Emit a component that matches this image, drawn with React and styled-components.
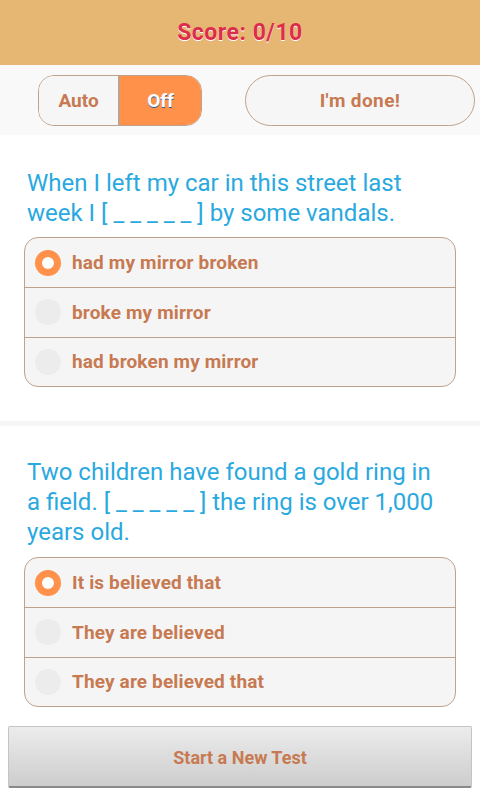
import React, { useState } from "react";
import styled, { createGlobalStyle } from "styled-components";

const Global = createGlobalStyle`
  html, body { margin: 0; padding: 0; background: #ffffff; }
  body { font-family: Roboto, "Noto Sans", sans-serif; }
  * { box-sizing: border-box; }
`;

const Page = styled.div`
  width: 480px;
  height: 800px;
  display: flex;
  flex-direction: column;
  background: #ffffff;
  overflow: hidden;
`;

const Header = styled.div`
  height: 65px;
  flex: 0 0 65px;
  background: #e6b673;
  display: flex;
  align-items: center;
  justify-content: center;
`;

const Score = styled.div`
  font-size: 23px;
  font-weight: 700;
  letter-spacing: 0.5px;
  color: #dd2c4c;
  text-shadow: 0 1px 0 #ffffff;
`;

const Toolbar = styled.div`
  height: 70px;
  flex: 0 0 70px;
  background: #f9f9f9;
  display: flex;
  align-items: center;
  padding: 0 5px 0 38px;
  gap: 43px;
`;

const Segmented = styled.div`
  display: flex;
  width: 164px;
  height: 51px;
  border: 1px solid #bfa28c;
  border-radius: 16px;
  overflow: hidden;
  background: #f6f6f6;
`;

const Segment = styled.button`
  flex: ${(p) => (p.$wide ? "0 0 79px" : "1")};
  border: none;
  border-left: ${(p) => (p.$divider ? "2px solid #bfa28c" : "none")};
  background: ${(p) => (p.$active ? "#ff914b" : "#f6f6f6")};
  color: ${(p) => (p.$active ? "#ffffff" : "#c77a52")};
  text-shadow: ${(p) => (p.$active ? "0 1px 0 #1c5c98" : "none")};
  font-family: Roboto, sans-serif;
  font-weight: 700;
  font-size: 19px;
  padding: 0;
`;

const DoneButton = styled.button`
  flex: 1;
  height: 51px;
  border: 1px solid #bfa28c;
  border-radius: 26px;
  background: #f6f6f6;
  color: #c77a52;
  font-family: Roboto, sans-serif;
  font-weight: 700;
  font-size: 19px;
  letter-spacing: 0.4px;
`;

const Section = styled.div`
  padding: ${(p) => p.$pad};
  border-top: ${(p) => (p.$sep ? "5px solid #f6f6f6" : "none")};
`;

const Question = styled.div`
  font-size: 24px;
  line-height: 30px;
  color: #2aa9e0;
  padding: 0 8px 0 3px;
  margin-bottom: ${(p) => p.$gap}px;
`;

const Options = styled.div`
  border: 1px solid #bfa28c;
  border-radius: 14px;
  overflow: hidden;
  background: #f5f5f5;
`;

const Option = styled.div`
  height: ${(p) => (p.$first ? 49 : 49.5)}px;
  display: flex;
  align-items: center;
  padding-left: 10px;
  gap: 11px;
  border-top: ${(p) => (p.$first ? "none" : "1px solid #bfa28c")};
`;

const Radio = styled.span`
  width: 26px;
  height: 26px;
  border-radius: 50%;
  flex: 0 0 26px;
  background: ${(p) => (p.$on ? "#ffffff" : "#ececec")};
  border: ${(p) => (p.$on ? "7px solid #ff914b" : "none")};
`;

const OptionText = styled.span`
  font-size: 19px;
  font-weight: 700;
  letter-spacing: 0.15px;
  color: #c77a52;
`;

const Footer = styled.div`
  padding: 19px 8px 0 8px;
`;

const NewTest = styled.button`
  width: 464px;
  height: 62px;
  border: 1px solid #c4c4c4;
  border-bottom: 2px solid #8a8a8a;
  border-radius: 2px;
  background: linear-gradient(#ececec, #cdcdcd);
  color: #c77a52;
  font-family: Roboto, sans-serif;
  font-weight: 700;
  font-size: 18px;
  padding-top: 2px;
`;

const questions = [
  {
    text: "When I left my car in this street last week I [ _ _ _ _ _ ] by some vandals.",
    options: ["had my mirror broken", "broke my mirror", "had broken my mirror"],
  },
  {
    text: "Two children have found a gold ring in a field. [ _ _ _ _ _ ] the ring is over 1,000 years old.",
    options: ["It is believed that", "They are believed", "They are believed that"],
  },
];

export default function App() {
  const [mode, setMode] = useState("off");
  const [answers, setAnswers] = useState([0, 0]);
  return (
    <Page>
      <Global />
      <Header>
        <Score>Score: 0/10</Score>
      </Header>
      <Toolbar>
        <Segmented>
          <Segment $active={mode === "auto"} onClick={() => setMode("auto")} $wide>
            Auto
          </Segment>
          <Segment $active={mode === "off"} $divider onClick={() => setMode("off")}>
            Off
          </Segment>
        </Segmented>
        <DoneButton>I'm done!</DoneButton>
      </Toolbar>
      {questions.map((q, qi) => (
        <Section
          key={qi}
          $sep={qi > 0}
          $pad={qi === 0 ? "33px 24px 34px 24px" : "31px 24px 0 24px"}
        >
          <Question $gap={qi === 0 ? 9 : 10}>{q.text}</Question>
          <Options>
            {q.options.map((o, oi) => (
              <Option
                key={oi}
                $first={oi === 0}
                onClick={() => setAnswers(answers.map((a, i) => (i === qi ? oi : a)))}
              >
                <Radio $on={answers[qi] === oi} />
                <OptionText>{o}</OptionText>
              </Option>
            ))}
          </Options>
        </Section>
      ))}
      <Footer>
        <NewTest>Start a New Test</NewTest>
      </Footer>
    </Page>
  );
}
